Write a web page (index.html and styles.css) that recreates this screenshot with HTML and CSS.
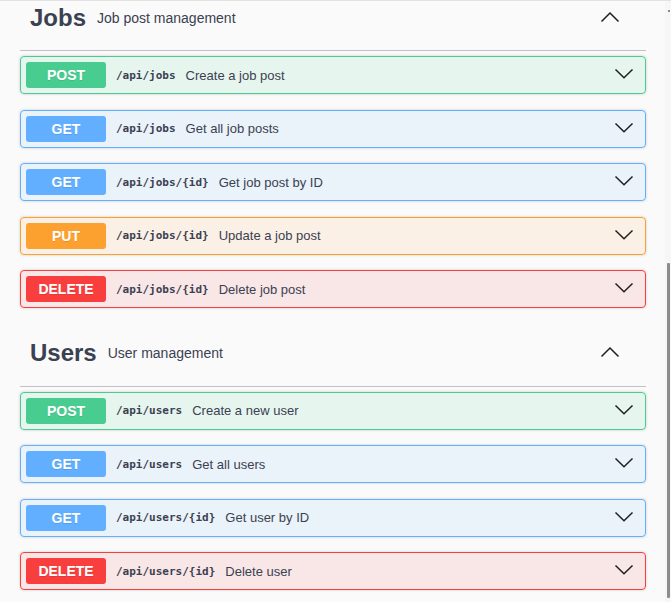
FILE: index.html
```html
<!DOCTYPE html>
<html lang="en">
<head>
<meta charset="utf-8">
<title>Swagger UI</title>
<link rel="stylesheet" href="styles.css">
</head>
<body>
<div class="topline"></div>
<div class="viewport">
  <div class="content">
    <section class="tag-section">
      <div class="tag-head">
        <h3 class="tag-name">Jobs</h3>
        <small class="tag-desc">Job post management</small>
        <svg class="arrow-up" width="20" height="20" viewBox="0 0 20 20"><polyline points="1.5,13.5 10,5 18.5,13.5"/></svg>
      </div>
      <div class="ops">
        <div class="op op-post"><span class="method">POST</span><span class="path">/api/jobs</span><span class="summary">Create a job post</span><svg class="arrow-down" width="20" height="20" viewBox="0 0 20 20"><polyline points="1.5,4.5 10,12.8 18.5,4.5"/></svg></div>
        <div class="op op-get"><span class="method">GET</span><span class="path">/api/jobs</span><span class="summary">Get all job posts</span><svg class="arrow-down" width="20" height="20" viewBox="0 0 20 20"><polyline points="1.5,4.5 10,12.8 18.5,4.5"/></svg></div>
        <div class="op op-get"><span class="method">GET</span><span class="path">/api/jobs/{id}</span><span class="summary">Get job post by ID</span><svg class="arrow-down" width="20" height="20" viewBox="0 0 20 20"><polyline points="1.5,4.5 10,12.8 18.5,4.5"/></svg></div>
        <div class="op op-put"><span class="method">PUT</span><span class="path">/api/jobs/{id}</span><span class="summary">Update a job post</span><svg class="arrow-down" width="20" height="20" viewBox="0 0 20 20"><polyline points="1.5,4.5 10,12.8 18.5,4.5"/></svg></div>
        <div class="op op-delete"><span class="method">DELETE</span><span class="path">/api/jobs/{id}</span><span class="summary">Delete job post</span><svg class="arrow-down" width="20" height="20" viewBox="0 0 20 20"><polyline points="1.5,4.5 10,12.8 18.5,4.5"/></svg></div>
      </div>
    </section>
    <section class="tag-section">
      <div class="tag-head">
        <h3 class="tag-name">Users</h3>
        <small class="tag-desc">User management</small>
        <svg class="arrow-up" width="20" height="20" viewBox="0 0 20 20"><polyline points="1.5,13.5 10,5 18.5,13.5"/></svg>
      </div>
      <div class="ops">
        <div class="op op-post"><span class="method">POST</span><span class="path">/api/users</span><span class="summary">Create a new user</span><svg class="arrow-down" width="20" height="20" viewBox="0 0 20 20"><polyline points="1.5,4.5 10,12.8 18.5,4.5"/></svg></div>
        <div class="op op-get"><span class="method">GET</span><span class="path">/api/users</span><span class="summary">Get all users</span><svg class="arrow-down" width="20" height="20" viewBox="0 0 20 20"><polyline points="1.5,4.5 10,12.8 18.5,4.5"/></svg></div>
        <div class="op op-get"><span class="method">GET</span><span class="path">/api/users/{id}</span><span class="summary">Get user by ID</span><svg class="arrow-down" width="20" height="20" viewBox="0 0 20 20"><polyline points="1.5,4.5 10,12.8 18.5,4.5"/></svg></div>
        <div class="op op-delete"><span class="method">DELETE</span><span class="path">/api/users/{id}</span><span class="summary">Delete user</span><svg class="arrow-down" width="20" height="20" viewBox="0 0 20 20"><polyline points="1.5,4.5 10,12.8 18.5,4.5"/></svg></div>
      </div>
    </section>
  </div>
</div>
<div class="scrollbar"><div class="scroll-arrow"></div><div class="scroll-thumb"></div></div>
</body>
</html>
```
FILE: styles.css
```css
html, body {
  margin: 0;
  padding: 0;
  background: #fafafa;
  font-family: "Liberation Sans", Arial, sans-serif;
  color: #3b4151;
}
.topline {
  height: 1px;
  background: #e2e2e2;
}
.viewport {
  height: 601px;
  overflow: hidden;
}
.content {
  padding: 0 25px 0 20px;
}
.tag-section:first-child {
  margin-top: -13px;
}
.tag-section + .tag-section {
  margin-top: 2px;
}
.tag-head {
  box-sizing: border-box;
  height: 63px;
  display: flex;
  align-items: center;
  padding: 0 26px 3px 10px;
  border-bottom: 1px solid rgba(59, 65, 81, 0.3);
}
.tag-name {
  margin: 0;
  font-size: 24px;
  font-weight: 700;
  color: #3b4151;
}
.tag-desc {
  flex: 1;
  font-size: 14px;
  padding-left: 11px;
  color: #3b4151;
}
.arrow-up, .arrow-down {
  flex: none;
  fill: none;
  stroke: #1f1f1f;
  stroke-width: 1.5;
}
.ops {
  padding-top: 5px;
}
.op {
  box-sizing: border-box;
  height: 38px;
  display: flex;
  align-items: center;
  padding: 0 11px 0 5px;
  margin-bottom: 15.5px;
  border: 1px solid;
  border-radius: 4px;
  box-shadow: 0 0 3px rgba(0, 0, 0, 0.19);
}
.method {
  width: 80px;
  height: 26px;
  display: flex;
  align-items: center;
  justify-content: center;
  border-radius: 3px;
  color: #fff;
  font-size: 14px;
  font-weight: 700;
  text-shadow: 0 1px 0 rgba(0, 0, 0, 0.1);
  flex: none;
}
.path {
  padding: 0 10px;
  font-family: "DejaVu Sans Mono", "Liberation Mono", monospace;
  font-size: 11px;
  font-weight: 700;
  color: #3b4151;
}
.summary {
  flex: 1;
  font-size: 13px;
  color: #3b4151;
}
.op-post { background: rgba(73, 204, 144, 0.1); border-color: #49cc90; }
.op-post .method { background: #49cc90; }
.op-get { background: rgba(97, 175, 254, 0.1); border-color: #61affe; }
.op-get .method { background: #61affe; }
.op-put { background: rgba(252, 161, 48, 0.1); border-color: #fca130; }
.op-put .method { background: #fca130; }
.op-delete { background: rgba(249, 62, 62, 0.1); border-color: #f93e3e; }
.op-delete .method { background: #f93e3e; }

.scrollbar {
  position: fixed;
  top: 1px;
  right: 0;
  bottom: 0;
  width: 6px;
  background: #f6f6f6;
}
.scroll-arrow {
  position: absolute;
  top: 9px;
  left: 3px;
  width: 2px;
  height: 2px;
  background: #8a8a8a;
}
.scroll-thumb {
  position: absolute;
  top: 262px;
  left: 2px;
  width: 3px;
  height: 335px;
  background: #8c8c8c;
  border-radius: 1px;
}
```
